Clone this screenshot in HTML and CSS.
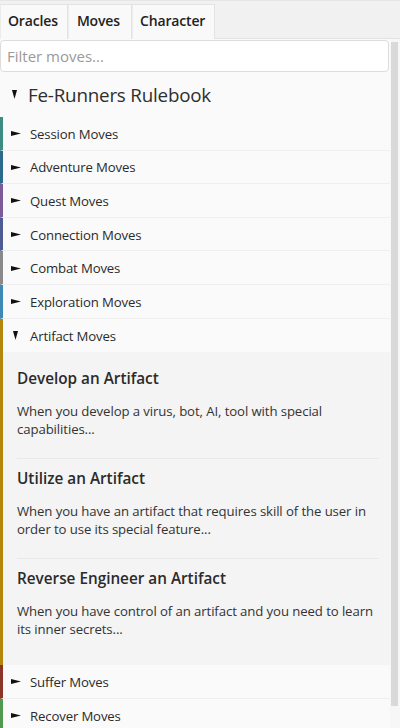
FILE: index.html
```html
<!DOCTYPE html>
<html lang="en">
<head>
<meta charset="utf-8">
<title>Moves</title>
<link rel="stylesheet" href="styles.css">
</head>
<body>
<div class="tabs">
  <div class="tab">Oracles</div>
  <div class="tab active">Moves</div>
  <div class="tab">Character</div>
</div>
<div class="main">
  <div class="content">
    <input class="filter" type="text" placeholder="Filter moves...">
    <div class="book">
      <svg class="caret-down big" width="5" height="9" viewBox="0 0 5 9"><polygon points="0,0 5,0 2.5,9" fill="#111"/></svg>
      <span>Fe-Runners Rulebook</span>
    </div>
    <div class="cat c-session"><svg class="caret-right" width="10" height="5" viewBox="0 0 10 5"><polygon points="0,0 0,5 10,2.5" fill="#111"/></svg><span>Session Moves</span></div>
    <div class="cat c-adventure"><svg class="caret-right" width="10" height="5" viewBox="0 0 10 5"><polygon points="0,0 0,5 10,2.5" fill="#111"/></svg><span>Adventure Moves</span></div>
    <div class="cat c-quest"><svg class="caret-right" width="10" height="5" viewBox="0 0 10 5"><polygon points="0,0 0,5 10,2.5" fill="#111"/></svg><span>Quest Moves</span></div>
    <div class="cat c-connection"><svg class="caret-right" width="10" height="5" viewBox="0 0 10 5"><polygon points="0,0 0,5 10,2.5" fill="#111"/></svg><span>Connection Moves</span></div>
    <div class="cat c-combat"><svg class="caret-right" width="10" height="5" viewBox="0 0 10 5"><polygon points="0,0 0,5 10,2.5" fill="#111"/></svg><span>Combat Moves</span></div>
    <div class="cat c-exploration"><svg class="caret-right" width="10" height="5" viewBox="0 0 10 5"><polygon points="0,0 0,5 10,2.5" fill="#111"/></svg><span>Exploration Moves</span></div>
    <div class="group c-artifact">
      <div class="cat open"><svg class="caret-down" width="5" height="9" viewBox="0 0 5 9"><polygon points="0,0 5,0 2.5,9" fill="#111"/></svg><span>Artifact Moves</span></div>
      <div class="moves">
        <div class="move">
          <div class="move-title">Develop an Artifact</div>
          <div class="move-desc">When you develop a virus, bot, AI, tool with special capabilities...</div>
        </div>
        <div class="move">
          <div class="move-title">Utilize an Artifact</div>
          <div class="move-desc">When you have an artifact that requires skill of the user in order to use its special feature...</div>
        </div>
        <div class="move">
          <div class="move-title">Reverse Engineer an Artifact</div>
          <div class="move-desc">When you have control of an artifact and you need to learn its inner secrets...</div>
        </div>
      </div>
    </div>
    <div class="cat c-suffer"><svg class="caret-right" width="10" height="5" viewBox="0 0 10 5"><polygon points="0,0 0,5 10,2.5" fill="#111"/></svg><span>Suffer Moves</span></div>
    <div class="cat c-recover"><svg class="caret-right" width="10" height="5" viewBox="0 0 10 5"><polygon points="0,0 0,5 10,2.5" fill="#111"/></svg><span>Recover Moves</span></div>
  </div>
  <div class="scrollbar"><div class="thumb"></div></div>
</div>
</body>
</html>
```

FILE: styles.css
```css
* { box-sizing: border-box; }
html, body {
  margin: 0;
  padding: 0;
  width: 400px;
  height: 728px;
  overflow: hidden;
  background: #fafafa;
  font-family: "Open Sans", "Noto Sans", sans-serif;
  color: #2b2b2b;
}
.tabs {
  display: flex;
  height: 39px;
  padding-top: 3px;
  background: #f1f1f1;
  border-top: 1px solid #e6e6e6;
  border-bottom: 1px solid #e2e2e2;
}
.tab {
  display: flex;
  align-items: center;
  height: 35px;
  padding: 0 9px 4px 7px;
  background: #f9f9f9;
  border-top: 1px solid #e3e3e3;
  border-right: 1px solid #e3e3e3;
  border-left: 1px solid #ececec;
  font-size: 14px;
  font-weight: 600;
  letter-spacing: -0.15px;
  color: #222;
}
.tab.active { padding-left: 8px; padding-right: 11px; }
.main {
  display: flex;
  height: 689px;
}
.content {
  flex: 1;
  overflow: hidden;
  padding-top: 1px;
  background: #fafafa;
}
.scrollbar {
  width: 10px;
  background: #f7f7f7;
  padding-top: 3px;
  padding-left: 1px;
}
.thumb {
  width: 7px;
  height: 664px;
  background: #d9d9d9;
}
.filter {
  display: block;
  width: 389px;
  height: 32px;
  margin: 0;
  padding: 0 6px;
  border: 1px solid #dcdcdc;
  border-radius: 4px;
  background: #fff;
  font-family: inherit;
  font-size: 15px;
  color: #333;
  outline: none;
}
.filter::placeholder { color: #9a9a9a; }
.book {
  display: flex;
  align-items: center;
  height: 45px;
  padding-left: 12px;
  gap: 11px;
  font-size: 18.8px;
  letter-spacing: -0.2px;
  color: #2e2e2e;
}
.cat {
  display: flex;
  align-items: center;
  height: 33.6px;
  padding-left: 11px;
  padding-top: 1px;
  gap: 9px;
  border-left: 3px solid transparent;
  border-bottom: 1px solid #efefef;
  font-size: 13.2px;
  letter-spacing: -0.15px;
  color: #2b2b2b;
}
.cat .caret-right { margin-left: -3px; }
.cat.open { border-left: none; border-bottom: none; padding-left: 10px; gap: 12px; }
.c-session { border-left-color: #3c8c84; }
.c-adventure { border-left-color: #2b6a8c; }
.c-quest { border-left-color: #7d5b99; }
.c-connection { border-left-color: #4e5b95; }
.c-combat { border-left-color: #8a8a8a; }
.c-exploration { border-left-color: #3d8ab8; }
.c-suffer { border-left-color: #8b3529; }
.c-recover { border-left-color: #4f9a50; }
.group.c-artifact {
  border-left: 3px solid #b5860d;
}
.moves {
  background: #f4f4f4;
  padding: 7px 11px 7px 14px;
}
.move {
  padding: 9px 0 20px;
  border-bottom: 1px solid #e9e9e9;
}
.move:last-child { border-bottom: none; }
.move-title {
  font-size: 15.3px;
  font-weight: 600;
  line-height: 20px;
  color: #2b2b2b;
  margin-bottom: 14px;
}
.move-desc {
  font-size: 13.2px;
  letter-spacing: -0.1px;
  line-height: 18px;
  color: #333;
}
```
